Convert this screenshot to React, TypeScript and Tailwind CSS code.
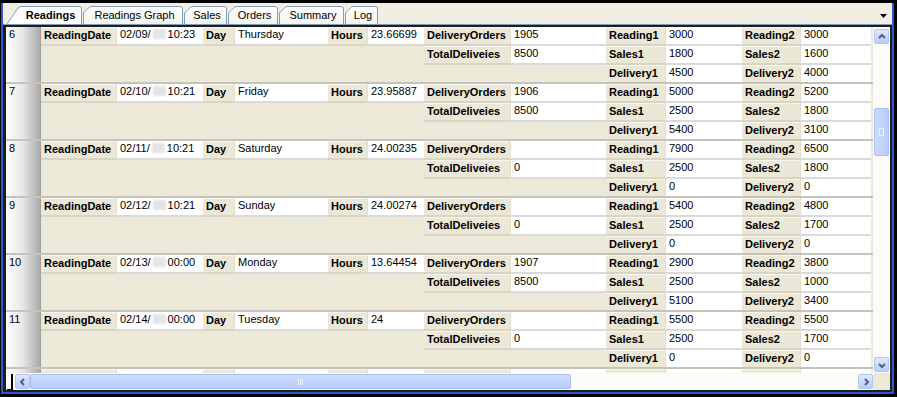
import React from 'react';

type Rec = {
  n: string; md: string; time: string; day: string; hours: string;
  dord: string; td: string; r1: string; r2: string; s1: string; s2: string; d1: string; d2: string;
};

const recs: Rec[] = [
  { n: '6', md: '02/09/', time: '10:23', day: 'Thursday', hours: '23.66699', dord: '1905', td: '8500', r1: '3000', r2: '3000', s1: '1800', s2: '1600', d1: '4500', d2: '4000' },
  { n: '7', md: '02/10/', time: '10:21', day: 'Friday', hours: '23.95887', dord: '1906', td: '8500', r1: '5000', r2: '5200', s1: '2500', s2: '1800', d1: '5400', d2: '3100' },
  { n: '8', md: '02/11/', time: '10:21', day: 'Saturday', hours: '24.00235', dord: '', td: '0', r1: '7900', r2: '6500', s1: '2500', s2: '1800', d1: '0', d2: '0' },
  { n: '9', md: '02/12/', time: '10:21', day: 'Sunday', hours: '24.00274', dord: '', td: '0', r1: '5400', r2: '4800', s1: '2500', s2: '1700', d1: '0', d2: '0' },
  { n: '10', md: '02/13/', time: '00:00', day: 'Monday', hours: '13.64454', dord: '1907', td: '8500', r1: '2900', r2: '3800', s1: '2500', s2: '1000', d1: '5100', d2: '3400' },
  { n: '11', md: '02/14/', time: '00:00', day: 'Tuesday', hours: '24', dord: '', td: '0', r1: '5500', r2: '5500', s1: '2500', s2: '1700', d1: '0', d2: '0' },
];

const blank: Rec = { n: '', md: '', time: '', day: '', hours: '', dord: '', td: '', r1: '', r2: '', s1: '', s2: '', d1: '', d2: '' };

function L({ t, last }: { t: string; last?: boolean }) {
  return (
    <div
      className={
        last
          ? 'bg-[#ebe8d8] border-t border-t-[#f7f6f0] pl-[3px] font-bold leading-[15px] whitespace-nowrap overflow-hidden'
          : 'bg-[#ebe8d8] border-t border-t-[#f7f6f0] border-b-2 border-b-[#d8d5c5] pl-[3px] font-bold leading-[15px] whitespace-nowrap overflow-hidden'
      }
    >
      {t}
    </div>
  );
}

function V({ children, last }: { children?: React.ReactNode; last?: boolean }) {
  return (
    <div
      className={
        last
          ? 'bg-white border-l border-l-[#e2dfd2] pl-[3px] leading-[14px] whitespace-nowrap overflow-hidden'
          : 'bg-white border-l border-l-[#e2dfd2] border-b-2 border-b-[#dadada] pl-[3px] leading-[14px] whitespace-nowrap overflow-hidden'
      }
    >
      {children}
    </div>
  );
}

function DateVal({ md, time }: { md: string; time: string }) {
  if (!md) return null;
  return (
    <span className="inline-flex items-center">
      <span>{md}</span>
      <span className="inline-block w-[13px] h-[10px] mx-[2px] bg-[#e4e4e4] blur-[1px]" />
      <span>{time}</span>
    </span>
  );
}

function Record({ r, showLabels = true }: { r: Rec; showLabels?: boolean }) {
  const t = (s: string) => (showLabels ? s : '');
  return (
    <div className="flex h-[57px] shrink-0 border-b-2 border-b-[#c6c4ba]">
      <div className="w-[35px] shrink-0 bg-linear-to-r from-white via-[#e6e6e6] to-[#aaaaaa] pl-[3px] leading-[14px] border-r border-r-[#a0a0a0]">
        {r.n}
      </div>
      <div className="grid grid-cols-[75px_87px_31px_94px_39px_57px_86px_96px_59px_77px_58px_71px] grid-rows-[19px_19px_17px] shrink-0">
        <L t={t('ReadingDate')} />
        <V><DateVal md={r.md} time={r.time} /></V>
        <L t={t('Day')} />
        <V>{r.day}</V>
        <L t={t('Hours')} />
        <V>{r.hours}</V>
        <L t={t('DeliveryOrders')} />
        <V>{r.dord}</V>
        <L t={t('Reading1')} />
        <V>{r.r1}</V>
        <L t={t('Reading2')} />
        <V>{r.r2}</V>

        <div className="col-span-6" />
        <L t={t('TotalDeliveies')} />
        <V>{r.td}</V>
        <L t={t('Sales1')} />
        <V>{r.s1}</V>
        <L t={t('Sales2')} />
        <V>{r.s2}</V>

        <div className="col-span-8" />
        <L t={t('Delivery1')} last />
        <V last>{r.d1}</V>
        <L t={t('Delivery2')} last />
        <V last>{r.d2}</V>
      </div>
    </div>
  );
}

function Tab({ label, w, selected }: { label: string; w: number; selected?: boolean }) {
  const h = 18;
  const d = selected
    ? `M0,${h} L11,2 Q12.5,0.5 15,0.5 L${w - 3},0.5 Q${w - 0.5},0.5 ${w - 0.5},3 L${w - 0.5},${h}`
    : `M0.5,${h} L0.5,7 L6,1.5 Q7,0.5 9,0.5 L${w - 3},0.5 Q${w - 0.5},0.5 ${w - 0.5},3 L${w - 0.5},${h}`;
  return (
    <div className="relative h-[18px] shrink-0 flex items-center justify-center" style={{ width: w }}>
      <svg className="absolute inset-0" width={w} height={h} viewBox={`0 0 ${w} ${h}`}>
        <defs>
          <linearGradient id="tabg" x1="0" y1="0" x2="0" y2="1">
            <stop offset="0" stopColor="#ffffff" />
            <stop offset="1" stopColor="#f4f3ee" />
          </linearGradient>
        </defs>
        <path d={d} fill={selected ? '#ffffff' : 'url(#tabg)'} stroke="#7f9db9" strokeWidth="1" />
      </svg>
      <span className={selected ? 'relative font-bold pl-[12px] leading-[14px]' : 'relative leading-[14px] pl-[3px]'}>{label}</span>
    </div>
  );
}

function Chevron({ dir }: { dir: 'up' | 'down' | 'left' | 'right' }) {
  const d =
    dir === 'up'
      ? 'M3,7 L6,4 L9,7'
      : dir === 'down'
      ? 'M3,5 L6,8 L9,5'
      : dir === 'left'
      ? 'M7,3 L4,6 L7,9'
      : 'M5,3 L8,6 L5,9';
  return (
    <svg width="12" height="12" viewBox="0 0 12 12">
      <path d={d} fill="none" stroke="#4d6185" strokeWidth="2" />
    </svg>
  );
}

function SBtn({ dir }: { dir: 'up' | 'down' | 'left' | 'right' }) {
  return (
    <div className="w-[15px] h-[15px] shrink-0 rounded-[2px] bg-linear-to-b from-[#dfe8fe] to-[#b9ccf9] border border-[#b2c6f5] flex items-center justify-center">
      <Chevron dir={dir} />
    </div>
  );
}

function Grip({ vertical }: { vertical?: boolean }) {
  return vertical ? (
    <div className="w-[5px] h-[8px] border border-[#e9effd] bg-[#c6d5fb]" />
  ) : (
    <div className="flex gap-[1px]">
      <div className="w-[1px] h-[6px] bg-[#eef3fe]" />
      <div className="w-[1px] h-[6px] bg-[#eef3fe]" />
      <div className="w-[1px] h-[6px] bg-[#eef3fe]" />
    </div>
  );
}

export default function App() {
  return (
    <div className="w-[897px] h-[397px] bg-black pt-[3px] pl-[1px] pr-[3px] pb-[3px] font-['Liberation_Sans',Arial,sans-serif] text-[11px] text-black overflow-hidden">
      <div className="h-full flex flex-col bg-[#ece9d8] border-l-2 border-r-2 border-b-2 border-[#2a5bd0]">
        {/* tab strip */}
        <div className="h-[22px] shrink-0 flex items-end pl-[4px] border-b border-b-[#7f9db9] bg-[#f1efe4]">
          <div className="flex items-end gap-[1px]">
            <Tab label="Readings" w={75} selected />
            <Tab label="Readings Graph" w={100} />
            <Tab label="Sales" w={43} />
            <Tab label="Orders" w={50} />
            <Tab label="Summary" w={65} />
            <Tab label="Log" w={33} />
          </div>
          <div className="ml-auto mr-[5px] mb-[6px]">
            <svg width="7" height="4" viewBox="0 0 7 4">
              <path d="M0,0 L7,0 L3.5,4 Z" fill="#000" />
            </svg>
          </div>
        </div>

        {/* content panel */}
        <div className="flex-1 min-h-0 flex flex-col border-2 border-[#1e1e1e] border-l-[3px]">
          <div className="flex-1 min-h-0 flex">
            <div className="flex-1 min-w-0 overflow-hidden flex flex-col bg-[#ece9d8]">
              {recs.map((r, i) => (
                <Record key={i} r={r} />
              ))}
              <Record r={blank} showLabels={false} />
            </div>
            <div className="w-[17px] shrink-0 bg-[#fbfbf8] flex flex-col items-center pt-[2px] pb-[1px]">
              <SBtn dir="up" />
              <div className="h-[64px] shrink-0" />
              <div className="w-[15px] h-[48px] shrink-0 rounded-[2px] bg-linear-to-r from-[#cddbfd] to-[#b8ccfa] border border-[#aac0f4] flex items-center justify-center">
                <Grip vertical />
              </div>
              <div className="flex-1" />
              <SBtn dir="down" />
            </div>
          </div>
          <div className="h-[17px] shrink-0 flex">
            <div className="flex-1 min-w-0 bg-[#fbfbf8] flex items-center">
              <div className="w-[6px] h-[16px] shrink-0 ml-[1px] border-r-2 border-b border-black" />
              <div className="w-[2px] shrink-0" />
              <SBtn dir="left" />
              <div className="w-[541px] h-[15px] shrink-0 rounded-[2px] bg-linear-to-b from-[#cddbfd] to-[#b8ccfa] border border-[#aac0f4] flex items-center justify-center">
                <Grip />
              </div>
              <div className="flex-1" />
              <SBtn dir="right" />
            </div>
            <div className="w-[17px] shrink-0 bg-[#ece9d8]" />
          </div>
        </div>
      </div>
    </div>
  );
}
